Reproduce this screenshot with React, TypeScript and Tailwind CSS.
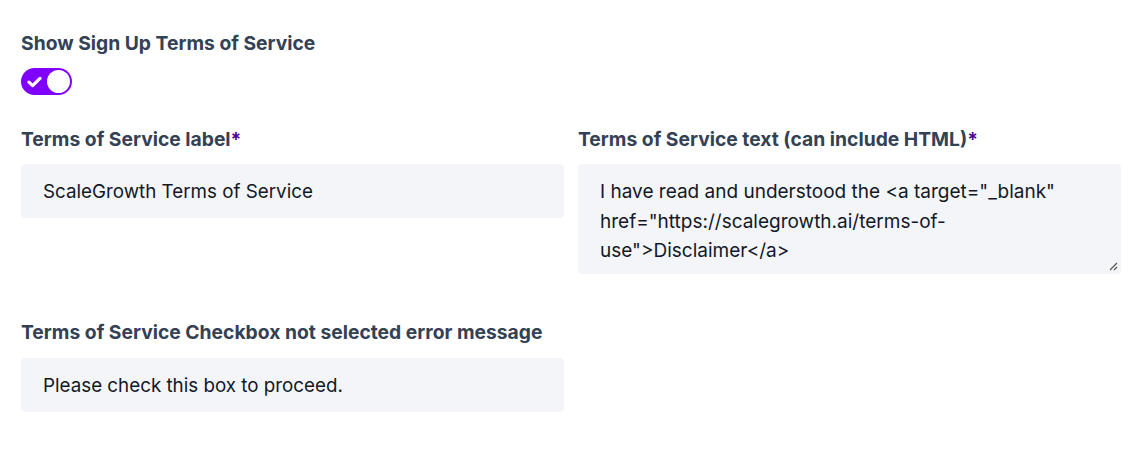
function Label({ text, required }: { text: string; required?: boolean }) {
  return (
    <label className="block text-[19.3px] font-bold leading-[24px] text-[#334155]">
      {text}
      {required && <span className="text-[#4c0699]">*</span>}
    </label>
  );
}

export default function App() {
  return (
    <div className="min-h-[450px] bg-white pl-[21px] pt-[31px] font-['Inter',sans-serif]">
      <div className="w-[1100px]">
        {/* Toggle */}
        <Label text="Show Sign Up Terms of Service" />
        <div className="mt-[13px] flex h-[27px] w-[51px] items-center justify-between rounded-full bg-[#7f00ff] pl-[6px] pr-[2px]">
          <svg width="15" height="12" viewBox="0 0 15 12">
            <path
              d="M2 6.2L5.6 9.6L13 2.4"
              fill="none"
              stroke="white"
              strokeWidth="3.2"
              strokeLinecap="round"
              strokeLinejoin="round"
            />
          </svg>
          <span className="h-[23px] w-[23px] rounded-full bg-white" />
        </div>

        <div className="mt-[32px] grid grid-cols-2 gap-x-[14px]">
          <div>
            <Label text="Terms of Service label" required />
            <div className="mt-[13px] flex h-[54px] items-center rounded-[4px] bg-[#f4f5f9] px-[22px] pt-[2px] text-[18.8px] text-[#111827]">
              ScaleGrowth Terms of Service
            </div>
          </div>
          <div>
            <Label text="Terms of Service text (can include HTML)" required />
            <div className="relative mt-[13px] h-[110px] rounded-[4px] bg-[#f4f5f9] px-[22px] pt-[13px] text-[19px] leading-[29.5px] text-[#111827]">
              I have read and understood the &lt;a target="_blank"
              <br />
              href="https://scalegrowth.ai/terms-of-
              <br />
              use"&gt;Disclaimer&lt;/a&gt;
              <svg
                className="absolute bottom-[3px] right-[3px]"
                width="9"
                height="9"
                viewBox="0 0 9 9"
              >
                <path d="M8 1L1 8M8 5L5 8" stroke="#555" strokeWidth="1.2" />
              </svg>
            </div>
          </div>
        </div>

        <div className="mt-[46px] w-[543px]">
          <Label text="Terms of Service Checkbox not selected error message" />
          <div className="mt-[14px] flex h-[54px] items-center rounded-[4px] bg-[#f4f5f9] px-[22px] pt-[2px] text-[18.8px] text-[#111827]">
            Please check this box to proceed.
          </div>
        </div>
      </div>
    </div>
  );
}
